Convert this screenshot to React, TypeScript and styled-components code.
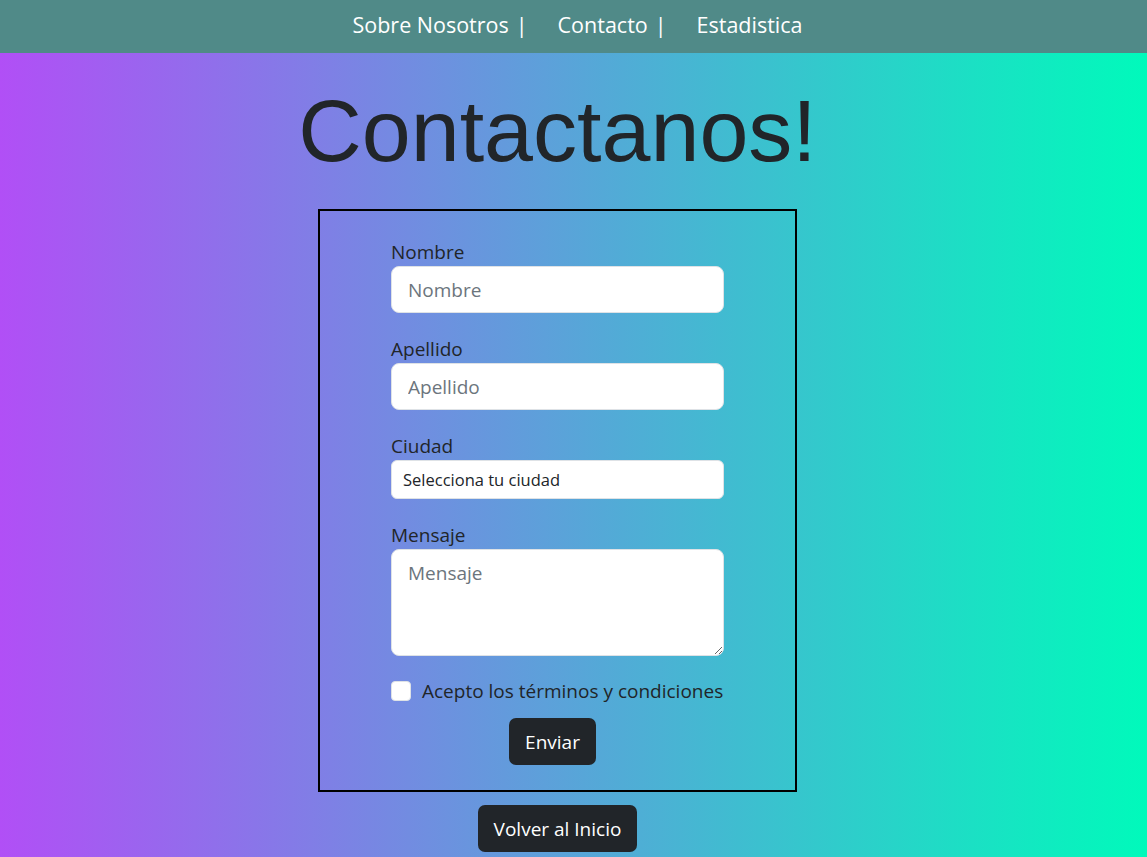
import React from 'react';
import styled, {createGlobalStyle} from "styled-components";

const GlobalStyle = createGlobalStyle`
  html, body {
    margin: 0;
    padding: 0;
  }
  body {
    font-family: "Open Sans", "Noto Sans", sans-serif;
    color: #212529;
  }
  * {
    box-sizing: border-box;
  }
`

const navLinks = ['Sobre Nosotros', 'Contacto', 'Estadistica']

const textFields = [
    {label: 'Nombre', placeholder: 'Nombre'},
    {label: 'Apellido', placeholder: 'Apellido'},
]

export default function App() {
    return (
        <Page>
            <GlobalStyle/>
            <NavBar>
                {navLinks.map((l, i) => (
                    <NavItem key={l}>
                        <NavLink href="#">{l}</NavLink>
                        {i < navLinks.length - 1 && <Divider>|</Divider>}
                    </NavItem>
                ))}
            </NavBar>
            <Main>
                <Title>Contactanos!</Title>
                <FormBox>
                    <Form onSubmit={e => e.preventDefault()}>
                        {textFields.map(f => (
                            <Group key={f.label}>
                                <Label>{f.label}</Label>
                                <Input type="text" placeholder={f.placeholder}/>
                            </Group>
                        ))}
                        <Group>
                            <Label>Ciudad</Label>
                            <Select defaultValue="">
                                <option value="">Selecciona tu ciudad</option>
                                <option>Buenos Aires</option>
                                <option>Córdoba</option>
                                <option>Rosario</option>
                            </Select>
                        </Group>
                        <Group>
                            <Label>Mensaje</Label>
                            <TextArea placeholder="Mensaje"/>
                        </Group>
                        <CheckRow>
                            <Check type="checkbox"/>
                            <CheckLabel>Acepto los términos y condiciones</CheckLabel>
                        </CheckRow>
                        <ButtonRow>
                            <DarkButton type="submit">Enviar</DarkButton>
                        </ButtonRow>
                    </Form>
                </FormBox>
                <BackRow>
                    <DarkButton type="button">Volver al Inicio</DarkButton>
                </BackRow>
            </Main>
        </Page>
    );
}

const Page = styled.div`
  min-height: 100vh;
  background: linear-gradient(90deg, #b14ff6 0%, #00fabb 100%);
`

const NavBar = styled.nav`
  height: 53px;
  background-color: #508a88;
  display: flex;
  justify-content: center;
  align-items: center;
  padding-left: 8px;
  padding-bottom: 4px;
`

const NavItem = styled.div`
  display: flex;
  align-items: center;
  margin-right: 30px;

  &:last-child {
    margin-right: 0;
  }
`

const NavLink = styled.a`
  color: #ffffff;
  text-decoration: none;
  font-size: 21.5px;
`

const Divider = styled.span`
  color: #ffffff;
  font-size: 21.5px;
  margin-left: 7px;
`

const Main = styled.main`
  display: flex;
  flex-direction: column;
  align-items: center;
  padding-right: 32px;
`

const Title = styled.h1`
  margin: 26px 0 0;
  font-family: "Liberation Sans", Arial, sans-serif;
  font-weight: 400;
  font-size: 88px;
  line-height: 104px;
  color: #212529;
  height: 130px;
`

const FormBox = styled.div`
  width: 479px;
  border: 2px solid #000;
  padding: 29px 71px 25px;
`

const Form = styled.form`
  display: flex;
  flex-direction: column;
`

const Group = styled.div`
  display: flex;
  flex-direction: column;
  margin-bottom: 24px;
`

const Label = styled.label`
  font-size: 19px;
  line-height: 24px;
  margin-bottom: 2px;
  color: #212529;
`

const fieldBase = `
  width: 100%;
  background: #fff;
  border: 1px solid #dee2e6;
  color: #212529;
  font-family: "Open Sans", "Noto Sans", sans-serif;
  outline: none;
  &::placeholder {
    color: #6c757d;
  }
`

const Input = styled.input`
  ${fieldBase};
  height: 47px;
  padding: 8px 16px;
  font-size: 19px;
  border-radius: 8px;
`

const Select = styled.select`
  ${fieldBase};
  appearance: none;
  height: 39px;
  padding: 6px 11px;
  font-size: 16.5px;
  border-radius: 6px;
`

const TextArea = styled.textarea`
  ${fieldBase};
  height: 107px;
  padding: 10px 16px 8px;
  font-size: 19px;
  border-radius: 8px;
  resize: vertical;
`

const CheckRow = styled.div`
  display: flex;
  align-items: center;
  gap: 11px;
  margin-top: -1px;
`

const Check = styled.input`
  appearance: none;
  width: 20px;
  height: 20px;
  margin: 0;
  background: #fff;
  border: 1px solid #dee2e6;
  border-radius: 4px;
  flex-shrink: 0;
`

const CheckLabel = styled.label`
  font-size: 19px;
  line-height: 24px;
  color: #212529;
  white-space: nowrap;
`

const ButtonRow = styled.div`
  display: flex;
  justify-content: center;
  margin-top: 15px;
  padding-right: 10px;
`

const DarkButton = styled.button`
  height: 47px;
  padding: 0 16px;
  background-color: #212529;
  color: #fff;
  border: none;
  border-radius: 7px;
  font-family: "Open Sans", "Noto Sans", sans-serif;
  font-size: 19px;
  cursor: pointer;
`

const BackRow = styled.div`
  margin-top: 13px;
  display: flex;
  justify-content: center;
`
